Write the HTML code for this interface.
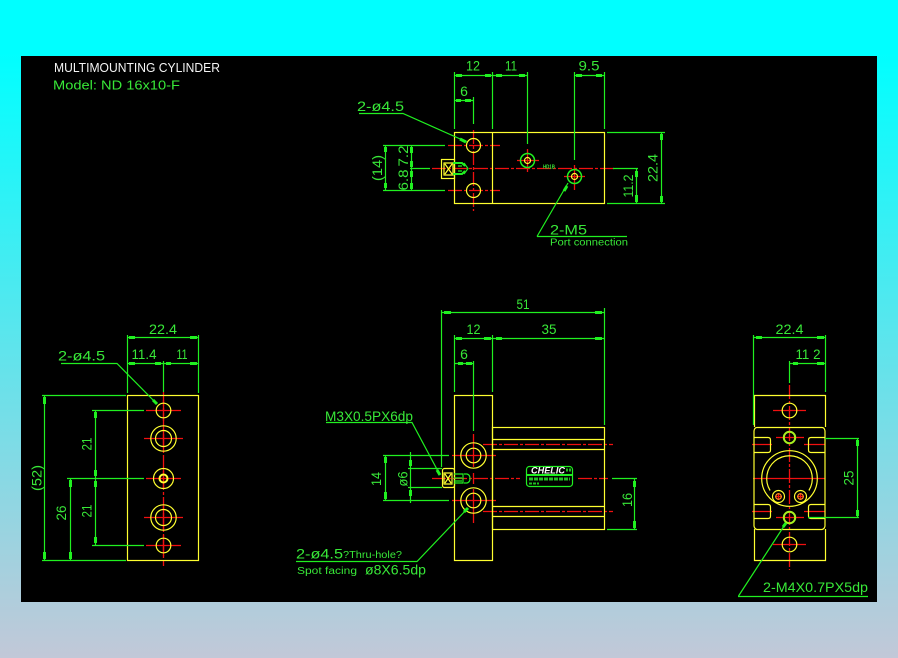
<!DOCTYPE html>
<html>
<head>
<meta charset="utf-8">
<style>
html,body{margin:0;padding:0;width:898px;height:658px;overflow:hidden}
body{background:linear-gradient(to bottom,#00ffff 0%,#00ffff 8%,#c2c8d8 100%)}
svg{position:absolute;left:0;top:0;display:block}
text{font-family:"Liberation Sans",sans-serif;fill:#38e838;font-size:14px}
.y{stroke:#ffff30;fill:none;stroke-width:1.200}
.g{stroke:#20f020;fill:none;stroke-width:1.200}
.r{stroke:#f01010;fill:none;stroke-width:1.300;stroke-dasharray:14 2 3 2}
.s{stroke:#f01010;fill:none;stroke-width:1.300}
.a{stroke:#20f020;fill:none;stroke-width:3}
</style>
</head>
<body>
<svg width="898" height="658" viewBox="0 0 898 658" xmlns="http://www.w3.org/2000/svg">
<rect x="21" y="56" width="856" height="546" fill="#000"/>

<!-- title -->
<text x="54" y="72" textLength="166" lengthAdjust="spacingAndGlyphs" style="fill:#f4f4f4;font-size:13px">MULTIMOUNTING  CYLINDER</text>
<text x="53" y="89.500" textLength="127" lengthAdjust="spacingAndGlyphs" style="font-size:13px">Model:  ND  16x10-F</text>

<!-- TOP VIEW -->
<g class="r">
<path d="M432 168.500H615"/>
<path d="M473.500 130V211"/>
<path d="M448 145.500H500M448 190.500H500"/>
</g>
<g class="s">
<path d="M517 160.500H539M527.500 149V172"/>
<path d="M564 176.500H585M574.500 165V190"/>
</g>
<g class="y">
<rect x="454.500" y="132.500" width="150" height="71"/>
<path d="M492.500 132.500V203.500"/>
<circle cx="473.500" cy="145.500" r="7"/>
<circle cx="473.500" cy="190.500" r="7"/>
<circle cx="527.500" cy="160.500" r="3"/>
<circle cx="574.500" cy="176.500" r="3"/>
<rect x="441.500" y="159.500" width="13" height="19"/>
<path d="M444 163H453V175H444ZM445 164L452 174M452 164L445 174"/>
</g>
<path class="g" style="stroke-width:2" d="M453 163h9l3 3M453 174h9l3-3"/>
<path class="g" d="M458 166h4M458 171h4M464 163l4 5.500l-4 5.500"/>
<circle class="g" cx="527.500" cy="160.500" r="7" style="stroke-width:1.500"/>
<circle class="g" cx="574.500" cy="176.500" r="7" style="stroke-width:1.500"/>
<text x="543" y="168.500" textLength="12" lengthAdjust="spacingAndGlyphs" style="font-size:5px;font-weight:bold">HD1B</text>

<g class="g">
<path d="M454.500 72V129M492.500 72V129M527.500 72V144M574.500 72V160M604.500 72V129M473.500 97V124"/>
<path d="M454 75.500H527.500M574 75.500H605M454 100.500H474"/>
<path d="M383 145.500H445M383 190.500H445M410 168.500H430"/>
<path d="M385.500 145V190M411.500 145V190"/>
<path d="M607 132.500H665M607 203.500H665M613 168.500H638"/>
<path d="M661.500 132V204M636.500 168V204"/>
<path d="M359 113.500H403L467 142"/>
<path d="M537 236.500H627M537 236.500L568 183"/>
</g>
<g class="a">
<path d="M456 75.500h6M485 75.500h6M496 75.500h6M519 75.500h6M576 75.500h6M596 75.500h6"/>
<path d="M456 100.500h5M465 100.500h6"/>
<path d="M385.500 147v5M385.500 183v5M411.500 147v6M411.500 161v6M411.500 171v6M411.500 183v6"/>
<path d="M661.500 134v6M661.500 196v6M636.500 171v6M636.500 195v7"/>
<path d="M460 139l6 3M564 191l3 -5"/>
</g>
<text x="473" y="70.500" text-anchor="middle" textLength="14" lengthAdjust="spacingAndGlyphs">12</text>
<text x="511" y="70.500" text-anchor="middle" textLength="12" lengthAdjust="spacingAndGlyphs">11</text>
<text x="589" y="70.500" text-anchor="middle" textLength="21" lengthAdjust="spacingAndGlyphs">9.5</text>
<text x="464" y="96" text-anchor="middle">6</text>
<text x="357" y="111" textLength="47" lengthAdjust="spacingAndGlyphs">2-ø4.5</text>
<text x="550" y="234.500" textLength="37" lengthAdjust="spacingAndGlyphs">2-M5</text>
<text x="550" y="245.500" textLength="78" lengthAdjust="spacingAndGlyphs" style="font-size:10px">Port  connection</text>
<text transform="translate(382 168) rotate(-90)" text-anchor="middle" textLength="26" lengthAdjust="spacingAndGlyphs">(14)</text>
<text transform="translate(408 156) rotate(-90)" text-anchor="middle" textLength="21" lengthAdjust="spacingAndGlyphs">7.2</text>
<text transform="translate(408 180) rotate(-90)" text-anchor="middle" textLength="21" lengthAdjust="spacingAndGlyphs">6.8</text>
<text transform="translate(633 186) rotate(-90)" text-anchor="middle" textLength="23" lengthAdjust="spacingAndGlyphs">11.2</text>
<text transform="translate(657.500 168) rotate(-90)" text-anchor="middle" textLength="28" lengthAdjust="spacingAndGlyphs">22.4</text>

<!-- LEFT VIEW -->
<g class="r"><path d="M163.500 392V566"/></g>
<g class="s">
<path d="M146 410.500H181M144 438.500H183M146 478.500H181M144 517.500H183M146 545.500H181"/>
<path d="M163.500 400V421M163.500 427V450M163.500 468V489M163.500 506V529M163.500 535V556"/>
</g>
<g class="y">
<rect x="127.500" y="395.500" width="71" height="165"/>
<circle cx="163.500" cy="410.500" r="7.300"/>
<circle cx="163.500" cy="438.500" r="12.700"/><circle cx="163.500" cy="438.500" r="8"/>
<circle cx="163.500" cy="478.500" r="10"/><circle cx="163.500" cy="478.500" r="4" style="stroke-width:2"/>
<circle cx="163.500" cy="517.500" r="12.700"/><circle cx="163.500" cy="517.500" r="8"/>
<circle cx="163.500" cy="545.500" r="7.300"/>
</g>
<g class="g">
<path d="M127.500 335V393M198.500 335V393M163.500 361V392"/>
<path d="M127 337.500H199M127 363.500H199"/>
<path d="M42 395.500H126M42 560.500H126"/>
<path d="M44.500 395V561M95.500 410V545M70.500 478V561"/>
<path d="M92 410.500H144M67 478.500H144M92 545.500H144"/>
<path d="M61 363.500H117L157 404"/>
</g>
<g class="a">
<path d="M129 337.500h6M190 337.500h7M129 363.500h6M155 363.500h6M166 363.500h5M190 363.500h7"/>
<path d="M44.500 397v7M44.500 552v7M95.500 412v6M95.500 470v6M95.500 481v6M95.500 537v6M70.500 480v7M70.500 552v7"/>
<path d="M153 400l4 4"/>
</g>
<text x="163" y="334" text-anchor="middle" textLength="28" lengthAdjust="spacingAndGlyphs">22.4</text>
<text x="144" y="359" text-anchor="middle" textLength="25" lengthAdjust="spacingAndGlyphs">11.4</text>
<text x="182" y="359" text-anchor="middle" textLength="11" lengthAdjust="spacingAndGlyphs">11</text>
<text x="58" y="360.500" textLength="47" lengthAdjust="spacingAndGlyphs">2-ø4.5</text>
<text transform="translate(41.500 478) rotate(-90)" text-anchor="middle" textLength="26" lengthAdjust="spacingAndGlyphs">(52)</text>
<text transform="translate(91.500 444) rotate(-90)" text-anchor="middle" textLength="13" lengthAdjust="spacingAndGlyphs">21</text>
<text transform="translate(91.500 511) rotate(-90)" text-anchor="middle" textLength="13" lengthAdjust="spacingAndGlyphs">21</text>
<text transform="translate(66 513) rotate(-90)" text-anchor="middle" textLength="15" lengthAdjust="spacingAndGlyphs">26</text>

<!-- CENTER VIEW -->
<g class="r">
<path d="M483 444.500H613M483 511.500H613"/>
<path d="M432 478.500H520M578 478.500H608"/>
</g>
<g class="s">
<path d="M473.500 434V467M473.500 473V484M473.500 489V523"/>
<path d="M452 455.500H496M452 500.500H496"/>
</g>
<g class="y">
<rect x="454.500" y="395.500" width="38" height="165"/>
<rect x="492.500" y="427.500" width="112" height="102"/>
<path d="M492.500 439.500H604.500M492.500 449.500H604.500M492.500 506.500H604.500M492.500 516.500H604.500"/>
<circle cx="473.500" cy="455.500" r="12.700"/><circle cx="473.500" cy="455.500" r="7.300"/>
<circle cx="473.500" cy="500.500" r="12.700"/><circle cx="473.500" cy="500.500" r="7.300"/>
<rect x="442.500" y="468.500" width="12" height="19" rx="2"/>
<path d="M444 473H452V484H444ZM445 474L451 483M451 474L445 483"/>
</g>
<path class="g" d="M454 474h9v9h-9M454 478h8M454 481h8M464 474h3c4 1 4 8 0 9h-3"/>
<g class="g">
<path d="M441.500 310V467M604.500 308V425M454.500 335V392M492.500 335V392M473.500 361V431"/>
<path d="M441 312.500H605M454 338.500H605M454 363.500H474"/>
<path d="M383 455.500H449M383 500.500H449M408 468.500H442M408 487.500H442"/>
<path d="M385.500 455V500M410.500 452V503"/>
<path d="M612 478.500H637M607 529.500H637M634.500 478V530"/>
<path d="M326 422.500H412L440 475"/>
<path d="M296 561.500H417L468 508"/>
</g>
<g class="a">
<path d="M444 312.500h7M595 312.500h7M456 338.500h6M484 338.500h7M496 338.500h6M595 338.500h7M458 363.500h5M466 363.500h6"/>
<path d="M385.500 457v6M385.500 492v7M410.500 460v6M410.500 490v6M634.500 481v6M634.500 521v7"/>
<path d="M437 470l3 5M464 512l4 -4"/>
</g>
<text x="523" y="309" text-anchor="middle" textLength="13" lengthAdjust="spacingAndGlyphs">51</text>
<text x="473.500" y="334" text-anchor="middle" textLength="14" lengthAdjust="spacingAndGlyphs">12</text>
<text x="549" y="334" text-anchor="middle" textLength="15" lengthAdjust="spacingAndGlyphs">35</text>
<text x="464" y="359" text-anchor="middle">6</text>
<text x="325" y="421" textLength="88" lengthAdjust="spacingAndGlyphs">M3X0.5PX6dp</text>
<text x="296" y="558.500" textLength="47" lengthAdjust="spacingAndGlyphs">2-ø4.5</text>
<text x="343" y="558" textLength="59" lengthAdjust="spacingAndGlyphs" style="font-size:10px">?Thru-hole?</text>
<text x="297" y="574" textLength="60" lengthAdjust="spacingAndGlyphs" style="font-size:10px">Spot  facing</text>
<text x="365" y="574.500" textLength="61" lengthAdjust="spacingAndGlyphs">ø8X6.5dp</text>
<text transform="translate(381 479) rotate(-90)" text-anchor="middle" textLength="14" lengthAdjust="spacingAndGlyphs">14</text>
<text transform="translate(407.500 479) rotate(-90)" text-anchor="middle" textLength="15" lengthAdjust="spacingAndGlyphs">ø6</text>
<text transform="translate(632 500) rotate(-90)" text-anchor="middle" textLength="14" lengthAdjust="spacingAndGlyphs">16</text>

<!-- Label -->
<rect x="526.500" y="466.500" width="46" height="20" rx="3" class="g"/>
<rect x="526" y="474" width="47" height="2" fill="#20f020"/>
<text x="531" y="473.500" textLength="34" lengthAdjust="spacingAndGlyphs" style="fill:#fff;font-size:9px;font-style:italic;font-weight:bold">CHELIC</text>
<path d="M529 479H570" stroke="#20c020" stroke-width="3" stroke-dasharray="4 1"/>
<path d="M529 483.500H539" stroke="#20c020" stroke-width="2" stroke-dasharray="3 1"/>
<path d="M566 470H571" stroke="#20c020" stroke-width="3" stroke-dasharray="2 1"/>

<!-- RIGHT VIEW -->
<g class="r">
<path d="M789.500 385V570"/>
</g>
<g class="s">
<path d="M753 478.500H825"/>
<path d="M773 410.500H806M773 544.500H806M776 437.500H804M776 517.500H804"/>
<path d="M752 444.500H772M804 444.500H825M752 511.500H772M804 511.500H825"/>
<path d="M775 496.500h7M778.500 493v7M797 496.500h7M800.500 493v7"/>
</g>
<g class="y">
<path d="M754.500 427V395.500H825.500V427M754.500 529V560.500H825.500V529"/>
<path d="M757 427.500H822Q824.500 427.500 825 431V526Q824.500 529 822 529.500H757Q754.500 529 754 526V431Q754.500 427.500 757 427.500Z"/>
<circle cx="789.500" cy="410.500" r="7.300"/>
<circle cx="789.500" cy="544.500" r="7.300"/>
<path d="M754 437.500H768Q770.500 437.500 770.500 440V450Q770.500 452.500 768 452.500H754M825 437.500H811Q808.500 437.500 808.500 440V450Q808.500 452.500 811 452.500H825"/>
<path d="M754 504.500H768Q770.500 504.500 770.500 507V516Q770.500 518.500 768 518.500H754M825 504.500H811Q808.500 504.500 808.500 507V516Q808.500 518.500 811 518.500H825"/>
<circle cx="789.500" cy="478.500" r="27.800"/>
<path d="M770.100 490.500A22.800 22.800 0 1 1 808.900 490.500"/>
<circle cx="778.500" cy="496.500" r="6"/>
<circle cx="800.500" cy="496.500" r="6"/>
</g>
<circle cx="778.500" cy="496.500" r="2.800" fill="none" stroke="#ff9020" stroke-width="1.200"/>
<circle cx="800.500" cy="496.500" r="2.800" fill="none" stroke="#ff9020" stroke-width="1.200"/>
<circle cx="789.500" cy="437.500" r="5.700" fill="none" stroke="#a8f020" stroke-width="2"/>
<circle cx="789.500" cy="517.500" r="5.700" fill="none" stroke="#a8f020" stroke-width="2"/>
<g class="g">
<path d="M753.500 335V425M825.500 335V392M789.500 361V383"/>
<path d="M753 337.500H826M789 363.500H826"/>
<path d="M825 438.500H859M808 517.500H859M857.500 438V518"/>
<path d="M738.500 596L786 523M738 596.500H868"/>
</g>
<g class="a">
<path d="M756 337.500h6M817 337.500h7M793 363.500h5M817 363.500h7"/>
<path d="M857.500 440v6M857.500 510v6M783 527l3 -4"/>
</g>
<text x="789.500" y="334" text-anchor="middle" textLength="28" lengthAdjust="spacingAndGlyphs">22.4</text>
<text x="808" y="359" text-anchor="middle" textLength="25" lengthAdjust="spacingAndGlyphs">11 2</text>
<text x="763" y="592" textLength="105" lengthAdjust="spacingAndGlyphs">2-M4X0.7PX5dp</text>
<text transform="translate(853.500 478) rotate(-90)" text-anchor="middle" textLength="15" lengthAdjust="spacingAndGlyphs">25</text>
</svg>
</body>
</html>
